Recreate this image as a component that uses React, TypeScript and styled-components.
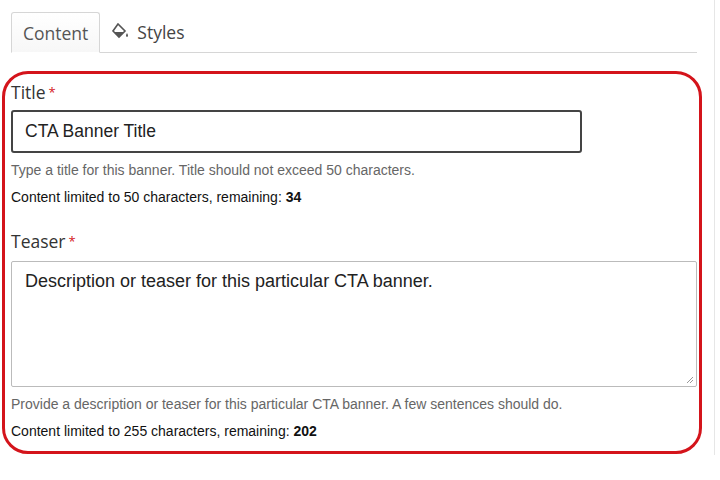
import React from "react";
import styled, { createGlobalStyle } from "styled-components";

const Global = createGlobalStyle`
  body { margin: 0; background: #fff; font-family: "Liberation Sans", Arial, sans-serif; }
`;

const Page = styled.div`
  width: 720px; height: 480px; box-sizing: border-box;
  padding: 12px 0 0 0; position: relative;
`;
const RightRule = styled.div`
  position: absolute; left: 714px; top: 0; width: 1px; height: 455px; background: #e6e6e6;
`;
const Tabs = styled.div`
  display: flex; margin: 0 23px 0 11px; border-bottom: 1px solid #d6d6d6; height: 40px;
`;
const Tab = styled.div<{ $active?: boolean }>`
  display: flex; align-items: center; gap: 6px; padding: 0 11px;
  font-family: "Open Sans", sans-serif; font-size: 17.5px; color: ${p => p.$active ? "#555" : "#444"};
  ${p => p.$active ? `border: 1px solid #d6d6d6; border-bottom: 1px solid #fff; background: linear-gradient(#fff, #f7f7f7); margin-bottom: -1px; border-radius: 3px 3px 0 0;` : ``}
`;
const Frame = styled.div`
  margin: 18px 18px 0 2px; border: 3px solid #d4141b; border-radius: 26px;
  padding: 6px 2px 6px 6px; height: 383px; box-sizing: border-box;
`;
const Label = styled.div`
  font-family: "Open Sans", sans-serif; font-size: 17.5px; color: #333; line-height: 24px;
  & span { color: #d4141b; font-size: 13px; vertical-align: top; margin-left: 3px; }
`;
const Input = styled.div`
  width: 571px; height: 43px; box-sizing: border-box; margin-top: 6px;
  border: 2px solid #444; border-radius: 3px; padding: 0 12px;
  display: flex; align-items: center; font-size: 17.5px; color: #222;
`;
const Area = styled.div`
  width: 686px; height: 126px; box-sizing: border-box; margin-top: 8px; position: relative;
  border: 1px solid #bbb; border-radius: 2px; padding: 9px 13px; font-size: 18px; color: #222;
`;
const Grip = styled.svg`position: absolute; right: 2px; bottom: 2px;`;
const Help = styled.div`font-size: 14px; color: #666; margin-top: 9px; line-height: 16px;`;
const Count = styled.div`font-size: 14px; color: #111; margin-top: 11px; line-height: 16px; & b { font-weight: bold; }`;
const Field = styled.div<{ $gap?: number }>`margin-top: ${p => p.$gap ?? 0}px;`;

export default function App() {
  return (
    <Page>
      <Global />
      <RightRule />
      <Tabs>
        <Tab $active>Content</Tab>
        <Tab>
          <svg width="20" height="18" viewBox="0 0 20 18">
            <path d="M7 1 L2 8 L8 14 L14 8 Z" fill="none" stroke="#555" strokeWidth="1.6" />
            <path d="M3 9 L13 9 L8 14 Z" fill="#555" />
            <path d="M16 10 q-2 3 0 4 q2 -1 0 -4Z" fill="#555" />
          </svg>
          Styles
        </Tab>
      </Tabs>
      <Frame>
        <Field>
          <Label>Title<span>*</span></Label>
          <Input>CTA Banner Title</Input>
          <Help>Type a title for this banner. Title should not exceed 50 characters.</Help>
          <Count>Content limited to 50 characters, remaining: <b>34</b></Count>
        </Field>
        <Field $gap={24}>
          <Label>Teaser<span>*</span></Label>
          <Area>
            Description or teaser for this particular CTA banner.
            <Grip width="9" height="9" viewBox="0 0 9 9"><path d="M8 2 L2 8 M8 5 L5 8" stroke="#999" /></Grip>
          </Area>
          <Help>Provide a description or teaser for this particular CTA banner. A few sentences should do.</Help>
          <Count>Content limited to 255 characters, remaining: <b>202</b></Count>
        </Field>
      </Frame>
    </Page>
  );
}
